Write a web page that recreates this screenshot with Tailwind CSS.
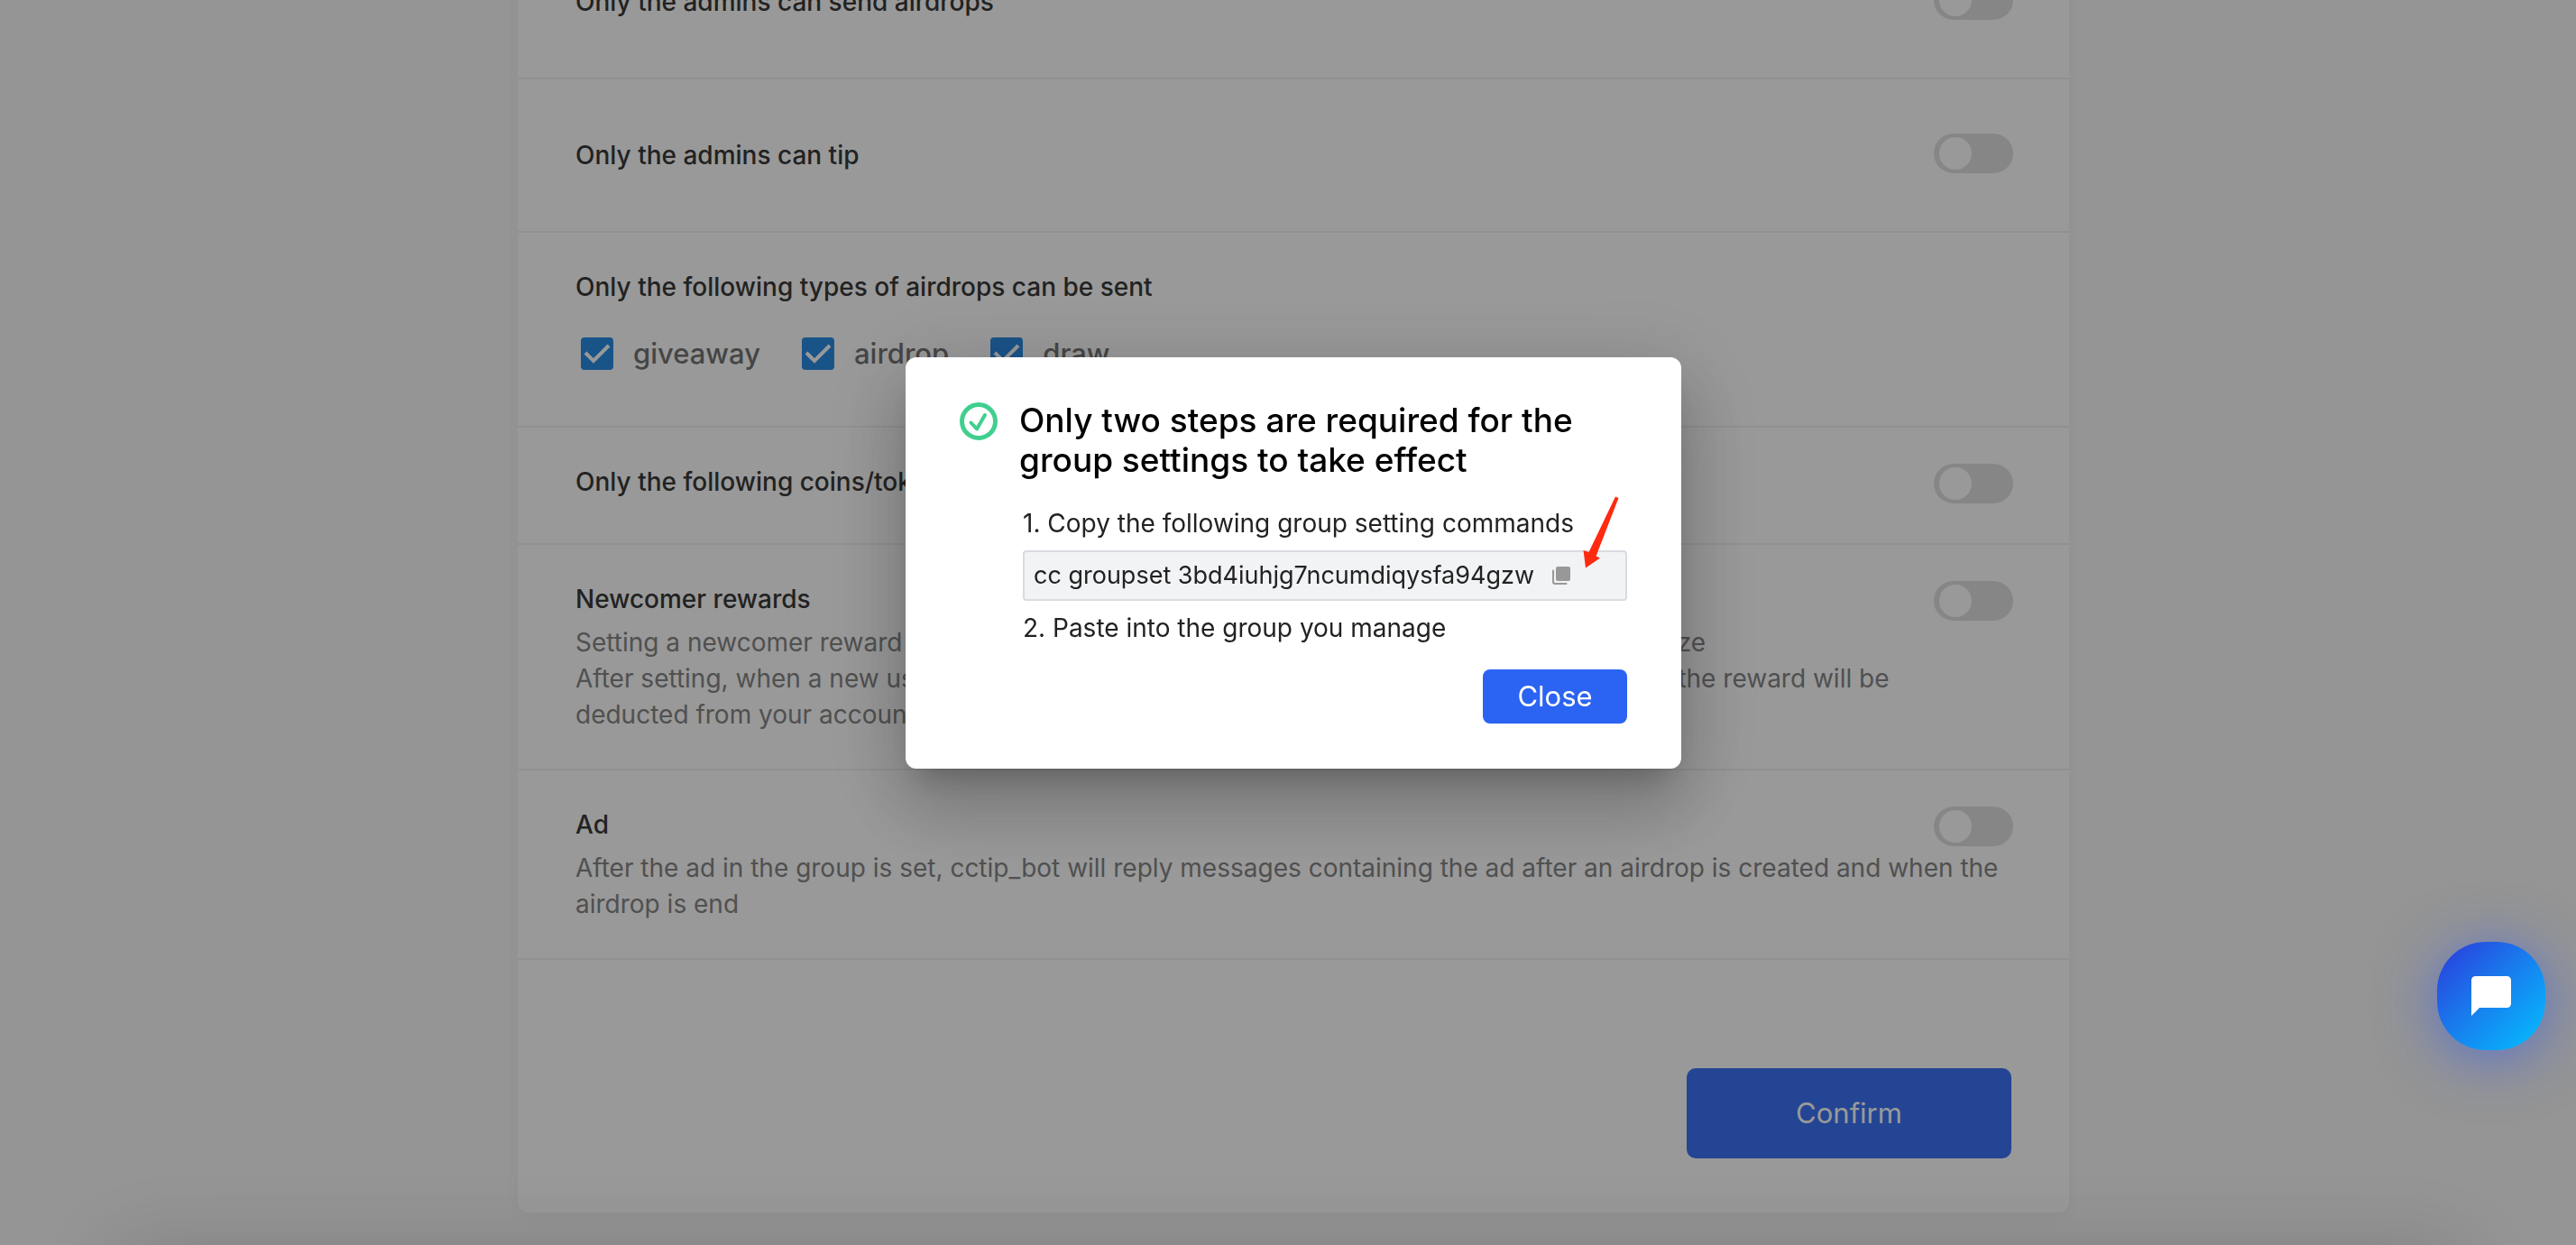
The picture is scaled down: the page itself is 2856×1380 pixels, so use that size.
<!DOCTYPE html>
<html lang="en">
<head>
<meta charset="utf-8">
<title>Group settings</title>
<script src="https://cdn.jsdelivr.net/npm/@tailwindcss/browser@4"></script>
</head>
<body class="h-screen overflow-hidden bg-[#f8f8f8] font-['Inter','Noto_Sans',sans-serif] text-[28px] leading-10 text-[#393939]">

<main class="flex justify-center pl-3">
  <form class="-mt-[82px] w-[1720px] max-w-full divide-y-2 divide-[#f1f1f1] rounded-b-xl bg-white shadow-[0_4px_16px_rgba(0,0,0,0.04)]">
    <div class="flex items-start justify-between pt-[60px] pr-[62px] pb-16 pl-16">
      <label for="admin-airdrops" class="pt-1 font-medium">Only the admins can send airdrops</label>
      <input id="admin-airdrops" type="checkbox" role="switch" class="h-11 w-22 appearance-none rounded-full bg-[#e0e0e0] py-1 pl-1.5 before:block before:size-9 before:rounded-full before:bg-white">
    </div>
    <div class="flex items-start justify-between pt-[60px] pr-[62px] pb-16 pl-16">
      <label for="admin-tip" class="pt-1 font-medium">Only the admins can tip</label>
      <input id="admin-tip" type="checkbox" role="switch" class="h-11 w-22 appearance-none rounded-full bg-[#e0e0e0] py-1 pl-1.5 before:block before:size-9 before:rounded-full before:bg-white">
    </div>
    <fieldset class="px-16 pt-10 pb-14">
      <legend class="float-left w-full font-medium">Only the following types of airdrops can be sent</legend>
      <div class="clear-both flex gap-[46px] pt-[30px] pl-1.5 text-[31px] font-medium text-[#747474]">
        <label class="flex h-12 items-center gap-[22px]">
          <span class="grid size-9">
            <input type="checkbox" checked class="col-start-1 row-start-1 size-9 appearance-none rounded-sm bg-[#2b8ce4]">
            <svg class="pointer-events-none col-start-1 row-start-1 size-9" viewBox="0 0 36 36" fill="none" stroke="#fff" stroke-width="4"><path d="M5 17l9 9L31 9"/></svg>
          </span>
          giveaway
        </label>
        <label class="flex h-12 items-center gap-[22px]">
          <span class="grid size-9">
            <input type="checkbox" checked class="col-start-1 row-start-1 size-9 appearance-none rounded-sm bg-[#2b8ce4]">
            <svg class="pointer-events-none col-start-1 row-start-1 size-9" viewBox="0 0 36 36" fill="none" stroke="#fff" stroke-width="4"><path d="M5 17l9 9L31 9"/></svg>
          </span>
          airdrop
        </label>
        <label class="flex h-12 items-center gap-[22px]">
          <span class="grid size-9">
            <input type="checkbox" checked class="col-start-1 row-start-1 size-9 appearance-none rounded-sm bg-[#2b8ce4]">
            <svg class="pointer-events-none col-start-1 row-start-1 size-9" viewBox="0 0 36 36" fill="none" stroke="#fff" stroke-width="4"><path d="M5 17l9 9L31 9"/></svg>
          </span>
          draw
        </label>
      </div>
    </fieldset>
    <div class="flex items-start justify-between pt-10 pr-[62px] pb-11 pl-16">
      <label for="coins" class="font-medium">Only the following coins/tokens can be sent</label>
      <input id="coins" type="checkbox" role="switch" class="h-11 w-22 appearance-none rounded-full bg-[#e0e0e0] py-1 pl-1.5 before:block before:size-9 before:rounded-full before:bg-white">
    </div>
    <div class="py-10 pr-[62px] pl-16">
      <div class="flex h-10 items-start justify-between">
        <label for="newcomer" class="font-medium">Newcomer rewards</label>
        <input id="newcomer" type="checkbox" role="switch" class="h-11 w-22 appearance-none rounded-full bg-[#e0e0e0] py-1 pl-1.5 before:block before:size-9 before:rounded-full before:bg-white">
      </div>
      <p class="pt-2 text-[#868686]">Setting a newcomer reward can motivate members to invite new users and increase group size<br>After setting, when a new user joins the group and promptly receives the newcomer reward, the reward will be<br>deducted from your account</p>
    </div>
    <div class="py-10 pr-[62px] pl-16">
      <div class="flex h-10 items-start justify-between">
        <label for="ad" class="font-medium">Ad</label>
        <input id="ad" type="checkbox" role="switch" class="h-11 w-22 appearance-none rounded-full bg-[#e0e0e0] py-1 pl-1.5 before:block before:size-9 before:rounded-full before:bg-white">
      </div>
      <p class="pt-2 text-[#868686]">After the ad in the group is set, cctip_bot will reply messages containing the ad after an airdrop is created and when the airdrop is end</p>
    </div>
    <div class="flex justify-end px-16 pt-30 pb-15">
      <button type="button" class="h-25 w-90 rounded-[10px] bg-[#3c73f5] text-[31px] text-white">Confirm</button>
    </div>
  </form>
</main>

<!-- Backdrop and dialog -->
<div class="fixed inset-0 flex items-center justify-center bg-black/40 pb-[132px] pl-3">
  <section role="dialog" aria-modal="true" aria-labelledby="dialog-title" class="relative w-[860px] rounded-xl bg-white pt-12 pr-15 pb-[50px] pl-15 text-[#222] shadow-[0_22px_30px_-14px_rgba(0,0,0,0.2),0_48px_76px_6px_rgba(0,0,0,0.14),0_18px_92px_16px_rgba(0,0,0,0.12)]">
    <div class="flex items-start gap-6">
      <svg class="mt-0.5 size-[42px] shrink-0" viewBox="0 0 42 42" fill="none" stroke="#40cf8f"><circle cx="21" cy="21" r="18.500" stroke-width="5"/><path d="M12.500 22.500l6.500 7L28 14" stroke-width="4" stroke-linecap="round" stroke-linejoin="round"/></svg>
      <h2 id="dialog-title" class="text-[37px] leading-11 font-medium text-black">Only two steps are required for the<br>group settings to take effect</h2>
    </div>
    <div class="pt-7 pl-[70px]">
      <p>1. Copy the following group setting commands</p>
      <div class="my-2.5 flex h-14 items-center gap-5 rounded-sm border-2 border-[#d8dbe1] bg-[#f2f3f5] pl-2.5">
        <code class="font-['Inter','Noto_Sans',sans-serif] text-[27px]">cc groupset 3bd4iuhjg7ncumdiqysfa94gzw</code>
        <button type="button" aria-label="Copy command">
          <svg class="block size-5" viewBox="0 0 20 20"><rect x="4" width="16" height="16" rx="2" fill="#989898"/><path d="M0 4.500a1 1 0 0 1 2 0V17a1 1 0 0 0 1 1h12.500a1 1 0 0 1 0 2H3a3 3 0 0 1-3-3z" fill="#989898"/></svg>
        </button>
      </div>
      <p>2. Paste into the group you manage</p>
      <div class="flex justify-end pt-[26px]">
        <button type="button" class="h-15 w-40 rounded-lg bg-[#2b64f2] text-[31px] text-white">Close</button>
      </div>
    </div>
    <!-- Pointer to the copy button -->
    <svg class="pointer-events-none absolute top-[154px] right-[69px] h-[80px] w-[40px]" viewBox="0 0 40 80" fill="#ff2a10"><path d="M36 0.500l3.500 1.500L14.500 66.500l4.500 2L3 79.500L0.500 60l6 2z"/></svg>
  </section>
</div>

<!-- Panel resting just below the window; only its shadow shows -->
<div class="pointer-events-none fixed inset-x-[120px] top-full h-60 shadow-[0_0_100px_rgba(0,0,0,0.14)]"></div>

<button type="button" aria-label="Open chat" class="fixed right-[34px] bottom-[216px] flex size-30 items-center justify-center rounded-[54px] bg-linear-to-br from-[#2a32da] to-[#08c0ff] shadow-[0_8px_64px_rgba(50,90,240,0.6)]">
  <svg class="size-11" viewBox="0 0 44 44" fill="#fff"><path d="M4.500 0h35A4.500 4.500 0 0 1 44 4.500v26a4.500 4.500 0 0 1-4.500 4.500H9L0 44V4.500A4.500 4.500 0 0 1 4.500 0z"/></svg>
</button>
</body>
</html>
